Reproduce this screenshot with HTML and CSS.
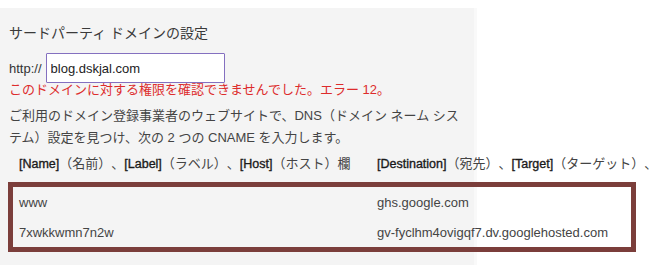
FILE: index.html
```html
<!DOCTYPE html>
<html lang="ja">
<head>
    <meta charset="UTF-8">
    <title>サードパーティ ドメインの設定</title>
    <link rel="stylesheet" href="styles.css">
</head>
<body>
    <div class="panel">
        <h2 class="title">サードパーティ ドメインの設定</h2>
        <div class="urlRow">
            <span class="scheme">http://</span>
            <input class="domainInput" type="text" value="blog.dskjal.com">
        </div>
        <p class="error">このドメインに対する権限を確認できませんでした。エラー 12。</p>
        <p class="desc">ご利用のドメイン登録事業者のウェブサイトで、DNS（ドメイン ネーム システム）設定を見つけ、次の 2 つの CNAME を入力します。</p>
        <div class="cnameHead">
            <span><b>[Name]</b>（名前）、<b>[Label]</b>（ラベル）、<b>[Host]</b>（ホスト）欄</span>
            <span><b>[Destination]</b>（宛先）、<b>[Target]</b>（ターゲット）、</span>
        </div>
        <div class="cnameBox">
            <div class="cnameRow">
                <span>www</span>
                <span>ghs.google.com</span>
            </div>
            <div class="cnameRow">
                <span>7xwkkwmn7n2w</span>
                <span>gv-fyclhm4ovigqf7.dv.googlehosted.com</span>
            </div>
        </div>
    </div>
</body>
</html>
```

FILE: styles.css
```css
*{
    margin:0;
    padding:0;
    box-sizing:border-box;
}
html,body{
    overflow:hidden;
}
body{
    font-family:"Liberation Sans","Noto Sans CJK JP",sans-serif;
    font-size:13px;
    color:#444;
    background:#fff;
    text-spacing-trim:space-all;
}
.panel{
    width:477px;
    height:257px;
    margin-top:8px;
    padding-top:15px;
    background:#f4f4f4;
    border-right:3px solid #f9f9f9;
}
.title{
    font-size:14px;
    font-weight:normal;
    color:#3a3a3a;
    line-height:20px;
    padding-left:9px;
}
.urlRow{
    display:flex;
    align-items:center;
    margin-top:10px;
    padding-left:9px;
}
.scheme{
    margin-right:4px;
    color:#333;
}
.domainInput{
    width:179px;
    height:30px;
    border:1px solid #8470c0;
    border-radius:1px;
    background:#fff;
    padding-left:4px;
    font-family:"Liberation Sans",sans-serif;
    font-size:13px;
    color:#222;
    outline:none;
}
.error{
    color:#dd2c2c;
    line-height:14px;
    padding-left:9px;
}
.desc{
    margin-top:8px;
    line-height:22px;
    padding-left:9px;
    padding-right:14px;
    color:#444;
}
.cnameHead{
    display:grid;
    grid-template-columns:358px max-content;
    margin-top:4px;
    margin-left:13px;
    padding-left:6px;
    line-height:22px;
    white-space:nowrap;
    width:max-content;
}
.cnameHead b{
    font-weight:normal;
    font-size:12.5px;
    color:#1a1a1a;
    -webkit-text-stroke:0.35px #1a1a1a;
}
.cnameBox{
    width:628px;
    margin-top:7px;
    margin-left:8px;
    border:5px solid #7b3e3b;
}
.cnameRow{
    display:grid;
    grid-template-columns:358px 1fr;
    padding-left:6px;
    height:30px;
    align-items:center;
    color:#444;
}
```
